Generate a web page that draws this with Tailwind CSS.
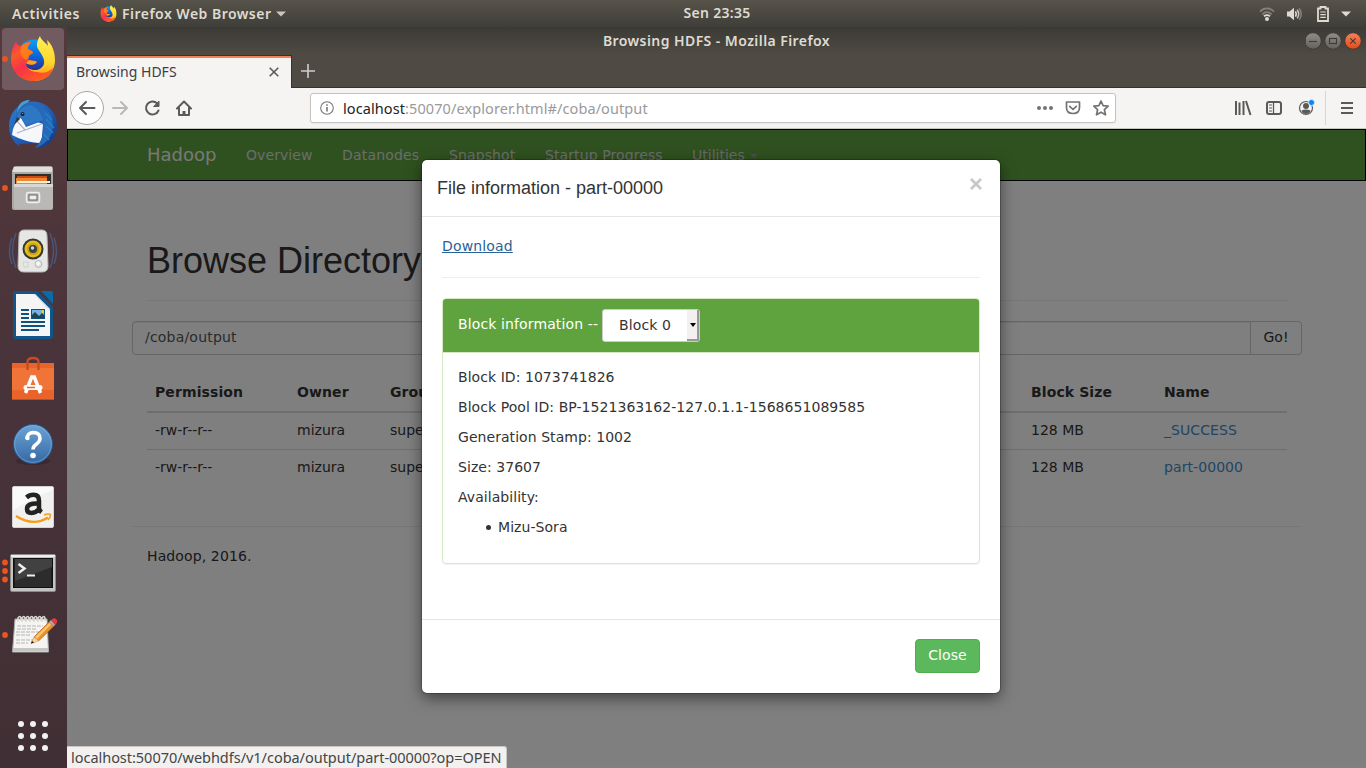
<!DOCTYPE html>
<html lang="en">
<head>
<meta charset="utf-8">
<title>Browsing HDFS</title>
<script src="https://cdn.jsdelivr.net/npm/@tailwindcss/browser@4"></script>
</head>
<body class="w-[1366px] h-[768px] overflow-hidden flex flex-col bg-[#3c3b37] font-['Noto_Sans',sans-serif] text-[14px]">

<!-- Desktop top bar -->
<header class="h-[27px] shrink-0 flex items-center bg-linear-to-b from-[#57534a] to-[#3f3e39] text-[#dfdbd2] font-semibold leading-[26px] whitespace-nowrap">
  <div class="w-[675px] flex items-center pl-3">
    <span class="w-[88px] tracking-[0.550px]">Activities</span>
    <svg class="w-[17px] h-[17px] mr-[5px]" viewBox="0 0 44 46"><use href="#fx"/></svg>
    <span class="tracking-[0.480px]">Firefox Web Browser</span>
    <svg class="w-[10px] h-[6px] ml-[5px]" viewBox="0 0 10 6"><path d="M0 .5h10L5 5.5z" fill="#c9c6be"/></svg>
  </div>
  <div class="w-[84px] text-center tracking-[0.300px] -mt-[1px]">Sen 23:35</div>
  <div class="flex-1 flex items-center justify-end pr-[15px]">
    <svg class="w-4 h-4 mr-[11px]" viewBox="0 0 16 16" fill="none" stroke-width="1.7"><path d="M1 5.6C5 1.300 11 1.300 15 5.600" stroke="#85827a"/><path d="M3.300 8.300C6 5.500 10 5.500 12.700 8.300" stroke="#85827a"/><path d="M5 10.200C7 8.700 9 8.700 11 10.200" stroke="#dfdbd2"/><circle cx="8" cy="13" r="2" fill="#dfdbd2"/></svg>
    <svg class="w-4 h-4 mr-[14px]" viewBox="0 0 16 16" fill="none"><path d="M1 5.500h2.500L8 1.700v12.600L3.500 10.500H1z" fill="#dfdbd2"/><path d="M9.400 5.300q1.700 2.700 0 5.400" stroke="#dfdbd2" stroke-width="1.500"/><path d="M11.200 3.700q3 4.300 0 8.600" stroke="#c9c6be" stroke-width="1.500"/><path d="M13.200 2.200q4 5.800 0 11.600" stroke="#85827a" stroke-width="1.500"/></svg>
    <svg class="w-[14px] h-[18px] mr-[11px]" viewBox="0 0 14 18"><path d="M2 3.500h2.500V2h5v1.500H12v12.500H2z" fill="none" stroke="#dfdbd2" stroke-width="1.800"/><path d="M4.300 7h5.500M4.300 9.700h5.500M4.300 12.300h5.500" stroke="#dfdbd2" stroke-width="1.200"/></svg>
    <svg class="w-[10px] h-[6px] mt-[1px]" viewBox="0 0 10 6"><path d="M0 .5h10L5 5.500z" fill="#dfdbd2"/></svg>
  </div>
</header>

<div class="flex flex-1 min-h-0">
<!-- Dock -->
<aside class="w-[67px] shrink-0 flex flex-col items-start bg-linear-to-b from-[#54393c] via-[#48333a] to-[#402f34] pt-[1px]">
  <svg class="w-[66px] h-[62px] mb-[1px]" viewBox="0 0 66 62">
    <defs>
      <linearGradient id="fxy" x1="0" y1="0" x2="0" y2="1"><stop offset="0" stop-color="#fff05a"/><stop offset=".6" stop-color="#ffd42a"/><stop offset="1" stop-color="#ff8a12"/></linearGradient>
      <linearGradient id="fxb" x1=".5" y1="0" x2=".5" y2="1"><stop offset="0" stop-color="#0aa0f5"/><stop offset=".5" stop-color="#0b62d8"/><stop offset="1" stop-color="#31207c"/></linearGradient>
      <linearGradient id="fxl" x1="0" y1="0" x2=".6" y2="1"><stop offset="0" stop-color="#f0256a"/><stop offset=".3" stop-color="#fa5a28"/><stop offset=".6" stop-color="#f8324a"/><stop offset="1" stop-color="#ff5a20"/></linearGradient>
      <symbol id="fx" viewBox="0 0 44 46">
        <circle cx="23" cy="21" r="17.500" fill="url(#fxb)"/>
        <path d="M29 0C26 5 25 9 27 13C30 18 34 22 33 28C31 34 23 36 17 32L6 30C8 40 15 45 23 45C36 45 44 35 44 24C44 16 41 8 36 4L37 10C34 6 30 4 29 0z" fill="url(#fxy)"/>
        <path d="M5 5C2 10 0 16 0 23C0 36 10 45 22 45C33 45 40 40 42 32C38 36 32 38 26 36C20 36 15 32 15 27C18 29 23 30 26 26C24 25 20 25 18 24C16 22 17 20 22 17C22 15 19 14 17 13C16 11 18 9 20 6C15 6 12 8 10 10C7 10 6 8 5 5z" fill="url(#fxl)"/>
        <path d="M11 9C14 7 18 6 20 6C18 9 16 11 17 13C19 14 22 15 22 17C19 19 17 19 18 22L15 24C11 22 7 16 11 9z" fill="#ff8a12" opacity=".75"/>
        <path d="M15 27C18 29 23 30 26 26C24 24 20 25 18 24z" fill="#ffa11a"/>
      </symbol>
    </defs>
    <rect x="2" y="0" width="62" height="62" rx="4" fill="#725b60"/>
    <circle cx="5" cy="31" r="2.900" fill="#e95420"/>
    <use href="#fx" x="11" y="8" width="44" height="46"/>
  </svg>

  <!-- Thunderbird -->
  <svg class="w-[66px] h-16" viewBox="0 0 66 64">
    <defs><linearGradient id="tb" x1="0" y1="0" x2="1" y2="1"><stop offset="0" stop-color="#2c7fd0"/><stop offset=".5" stop-color="#1f5fb8"/><stop offset="1" stop-color="#17317a"/></linearGradient></defs>
    <path d="M23 13C30 9 40 10 47 15C54 20 57 27 57 35C57 44 52 52 43 56L34 57L39 52L19 53L20 56C13 51 9 44 9 35C9 25 14 17 23 13z" fill="url(#tb)"/>
    <path d="M20 25L43 33L42 46L40 52C30 52 20 48 12 44L13 38L16 31z" fill="#f6f7fa"/>
    <path d="M17 30L25 39L42 33M25 39L17 42" fill="none" stroke="#b0b5c0" stroke-width="1.200"/>
    <path d="M18 16C21 11 24 9 30 9L27 12C36 12 44 15 49 21C54 28 54 38 50 46C46 52 41 55 35 57C42 50 44 44 43 34L42 30L26 36L21 27L17 29C16 24 16 20 18 16z" fill="#2868b8"/>
    <path d="M17 26C18 20 22 15 30 14C37 16 41 22 43 29L26 34L21 27z" fill="#2d77c5"/>
    <path d="M18 16C21 11 24 9 30 9L27 12C23 13 20 16 17 22z" fill="#4a9dcc"/>
    <path d="M45 22L52 29M46 28L54 37M46 35L53 42M44 43L49 49" stroke="#1e86c8" stroke-width="1.300"/>
    <circle cx="22.500" cy="23" r="2" fill="#18222e"/><circle cx="22.500" cy="22.500" r=".8" fill="#a58e55"/><path d="M17 26L20 28L14 34z" fill="#303844"/>
  </svg>

  <!-- Files -->
  <svg class="w-[66px] h-16" viewBox="0 0 66 64">
    <circle cx="5" cy="33" r="2.900" fill="#e95420"/>
    <path d="M13 14q0-3 3-3h34q3 0 3 3v39q0 2-2 2H14q-2 0-2-2V15z" fill="#aaa9a6"/><path d="M14 12h38v5H12.500z" fill="#e0dfdd"/>
    <path d="M15 19h36v12H15z" fill="#302f2e"/><path d="M17 21h30v5H17z" fill="#c84b12"/><path d="M16 23h31v7H16z" fill="#f38430"/><path d="M17 26h33v2H17z" fill="#fff0d2"/>
    <path d="M14 29h38q1 0 1 1v22q0 2-2 2H16q-2 0-2-2z" fill="#b9b8b6"/><path d="M14 29h39v3H14z" fill="#d8d7d5"/>
    <rect x="26.500" y="37.500" width="13" height="10" rx="2" fill="#bbb" stroke="#eee" stroke-width="1.500"/><rect x="29" y="40" width="8" height="5" fill="#eee" stroke="#666"/>
  </svg>

  <!-- Rhythmbox -->
  <svg class="w-[66px] h-16" viewBox="0 0 66 64">
    <g fill="none" stroke="#4c5578" stroke-width="1.500"><path d="M16 14q-7 17 0 35M12 19q-5 13 0 26M50 14q7 17 0 35M54 19q5 13 0 26"/></g>
    <path d="M24 11h18q5 0 5 6l1 30q0 6-6 6H24q-6 0-6-6l1-30q0-6 5-6z" fill="#e6e6e4" stroke="#b8b8b5"/>
    <circle cx="33" cy="30" r="10.500" fill="#353734"/><circle cx="33" cy="30" r="8.500" fill="#e4bd18"/><circle cx="33" cy="30" r="6" fill="#c8a01a"/><circle cx="33" cy="30" r="4" fill="#3e4248"/><circle cx="32.500" cy="29" r="1.700" fill="#d2d9df"/>
    <circle cx="38.500" cy="45" r="3.500" fill="#ddd" stroke="#bbb"/><circle cx="38" cy="44.500" r="2" fill="#f7f7f7"/><path d="M23 43h5v5h-4z" fill="none" stroke="#d2d2d2"/>
  </svg>

  <!-- Writer -->
  <svg class="w-[66px] h-16" viewBox="0 0 66 64">
    <path d="M15 8h22l16 16v29q0 3-3 3H16q-3 0-3-3V10q0-2 2-2z" fill="#10568a"/><path d="M41 8h10q2 0 2 2v11z" fill="#0b6aaa"/>
    <path d="M16 11h19l15 15v27H16z" fill="#f5f5f5"/><path d="M35 11l15 15v2L34 11z" fill="#d5d9dc"/>
    <path d="M21 27h8M21 31h8M21 35h8M21 39h24M21 43h24M21 47h18" stroke="#0f5180" stroke-width="2"/>
    <rect x="31" y="26" width="14" height="10" fill="#72b6df"/><path d="M31 36v-3l4-4 4 4 3-3 3 3v3z" fill="#234252"/><circle cx="43" cy="28.500" r="1.500" fill="#edce3d"/><rect x="31.500" y="26.500" width="13" height="9" fill="none" stroke="#0f5180"/>
  </svg>

  <!-- Software -->
  <svg class="w-[66px] h-16" viewBox="0 0 66 64">
    <path d="M12 16h42v37H12z" fill="#f07438"/><path d="M12 16h42v5H12zM12 43h42v10H12z" fill="#e9642b"/><path d="M12 52h42v1H12z" fill="#c64c20"/>
    <path d="M27.500 23v-8q0-4 5.500-4t5.500 4v8" fill="none" stroke="#c94a22" stroke-width="2.400"/>
    <path d="M25.500 46L31.700 30h2.600L40.500 46" fill="none" stroke="#fff" stroke-width="3.500"/><path d="M26 40.500h14" stroke="#fff" stroke-width="5" stroke-linecap="round"/><path d="M27 40.500h8" stroke="#e9642b" stroke-width="1.500"/>
  </svg>

  <!-- Help -->
  <svg class="w-[66px] h-16" viewBox="0 0 66 64">
    <defs><linearGradient id="hp" x1="0" y1="0" x2="0" y2="1"><stop stop-color="#6ba4d6"/><stop offset="1" stop-color="#3568a4"/></linearGradient></defs>
    <ellipse cx="33" cy="50" rx="17" ry="4" fill="#2d2227" opacity=".5"/><circle cx="33" cy="33" r="19.500" fill="url(#hp)" stroke="#29598f"/><circle cx="33" cy="33" r="18.300" fill="none" stroke="#82b2dc" opacity=".6"/>
    <path d="M27 28q0-6 6-6.500 7 0 7 6 0 3-4 6-3 2-3 5" fill="none" stroke="#fff" stroke-width="3.500"/><circle cx="27.500" cy="27" r="2.200" fill="#fff"/><circle cx="33" cy="44.500" r="2.800" fill="#fff"/>
  </svg>

  <!-- Amazon -->
  <svg class="w-[66px] h-[66px]" viewBox="0 0 66 66">
    <rect x="12.500" y="11.500" width="41" height="41" rx="1.500" fill="#f0f0ef" stroke="#d5d2d3"/><path d="M13 12h40v3Q30 24 13 35z" fill="#fff" opacity=".6"/>
    <path d="M26.500 22.500q3-2.700 7-2.700 5.500 0 5.500 6v6.500q0 3 2.500 5M38 28.500q-11-.5-11 5.500 0 4 4.500 4 5 0 7.500-4.500" fill="none" stroke="#222" stroke-width="4.500"/>
    <path d="M16 41q17 11 32 1.500" fill="none" stroke="#f79b1c" stroke-width="2.400"/><path d="M44 40q4-1.500 6.500-.5 0 3-2.500 5.500" fill="none" stroke="#f79b1c" stroke-width="1.500"/>
  </svg>

  <!-- Terminal -->
  <svg class="w-[66px] h-[63px]" viewBox="0 0 66 63">
    <g fill="#e95420"><circle cx="5" cy="21.500" r="2.900"/><circle cx="5" cy="30" r="2.900"/><circle cx="5" cy="38.500" r="2.900"/></g>
    <rect x="10.500" y="13.500" width="45" height="37" rx="1.500" fill="#c4c4c2" stroke="#8b8b88"/><path d="M11 14h44v2H11z" fill="#eeeeec"/><rect x="13" y="17" width="40" height="30" fill="#111"/><rect x="14.500" y="18" width="37" height="28" fill="#2c2c2c"/><path d="M15 18h37v8L15 40z" fill="#414141"/>
    <path d="M18.500 23l6 4.500-6 4.500" fill="none" stroke="#eee" stroke-width="2.500"/><path d="M27 34.500h8" stroke="#eee" stroke-width="2"/>
  </svg>

  <!-- Text editor -->
  <svg class="w-[66px] h-[62px]" viewBox="0 0 66 62">
    <circle cx="5" cy="31" r="2.900" fill="#e95420"/>
    <g transform="translate(0 1)">
    <path d="M15 14h32l1.500 33h-36z" fill="#f4f4f2" stroke="#aaa"/><path d="M13 43h35v3H13z" fill="#c5c5c3"/>
    <g fill="none" stroke="#d8d8d6" stroke-width="1.500"><path d="M18 17v-4q2-3 3 0v3M22 17v-4q2-3 3 0v3M26 17v-4q2-3 3 0v3M30 17v-4q2-3 3 0v3M34 17v-4q2-3 3 0v3M38 17v-4q2-3 3 0v3M42 17v-4q2-3 3 0v3"/></g>
    <path d="M17 21h26M17 24h20M16 27h24M16 30h14M16 35h17M16 38h12" stroke="#b5b5b5" stroke-width="1" stroke-dasharray="4 1"/>
    <path d="M31 38.500l3.500-7L49 17l4.500 4.500L39 35.500z" fill="#e9912c" stroke="#b85f13" stroke-width=".7"/><path d="M35 32L49.500 18l1.500 1.500L37 34z" fill="#fcc46d"/><path d="M31 38.500l3-6 4.500 3.500z" fill="#ecd6a6"/><path d="M31 38.500l1-2.500 2 1.500z" fill="#111"/>
    <path d="M49 17l2-2 4.500 4.500-2 2z" fill="#aaa"/><path d="M51 15q3-3 5-1 2.500 2 0 5l-1 1z" fill="#e23b3f"/>
    </g>
  </svg>
  <svg class="w-8 h-8 ml-[17px] mt-[54px]" viewBox="0 0 32 32" fill="#f3f2f2"><circle cx="4" cy="4" r="3"/><circle cx="16" cy="4" r="3"/><circle cx="28" cy="4" r="3"/><circle cx="4" cy="16" r="3"/><circle cx="16" cy="16" r="3"/><circle cx="28" cy="16" r="3"/><circle cx="4" cy="28" r="3"/><circle cx="16" cy="28" r="3"/><circle cx="28" cy="28" r="3"/></svg>
</aside>

<!-- Browser window -->
<main class="flex-1 min-w-0 flex flex-col">
  <div class="h-[28px] shrink-0 grid grid-cols-[1fr_300px_1fr] items-center bg-linear-to-b from-[#3b3a36] to-[#4f4b44] text-[#dfdbd2] font-semibold">
    <span></span>
    <span class="text-center leading-[28px] tracking-[0.430px]">Browsing HDFS - Mozilla Firefox</span>
    <svg class="w-[60px] h-[20px] justify-self-end" viewBox="0 0 60 20">
      <defs><linearGradient id="wb" x1="0" y1="0" x2="0" y2="1"><stop stop-color="#8f8d86"/><stop offset="1" stop-color="#63615a"/></linearGradient><linearGradient id="wc" x1="0" y1="0" x2="0" y2="1"><stop stop-color="#f7825c"/><stop offset="1" stop-color="#e04b19"/></linearGradient></defs>
      <g stroke="#33322e" stroke-width=".7"><circle cx="7" cy="10" r="8.200" fill="url(#wb)"/><circle cx="27" cy="10" r="8.200" fill="url(#wb)"/><circle cx="47" cy="10" r="8.200" fill="url(#wc)"/></g>
      <g fill="none" stroke="#3c3b37" stroke-width="1.100"><path d="M3 10.500h8"/><rect x="23.500" y="7.500" width="7" height="5"/><path d="M44.300 7.300l5.400 5.400M49.700 7.300l-5.400 5.400"/></g>
    </svg>
  </div>
  <div class="h-[33px] shrink-0 flex items-stretch bg-[#4f4b44]">
    <div class="w-[225px] flex items-center bg-[#f5f4f2] border-t-1 border-t-[#35332f] border-r border-r-[#35332f]">
      <div class="w-full h-full flex items-center border-t-2 border-[#f08256] pl-[9px] pr-[12px] pb-[2px] text-[#3d4045]">
        <span class="flex-1 text-[14px] -mt-[2px]">Browsing HDFS</span>
        <svg class="w-[10px] h-[10px]" viewBox="0 0 10 10"><path d="M.7.7l8.600 8.600M9.300.7L.7 9.300" stroke="#5a5a5a" stroke-width="1.600"/></svg>
      </div>
    </div>
    <div class="flex-1 flex items-center border-b border-[#35332f] pl-[9px]"><svg class="w-[14px] h-[14px]" viewBox="0 0 14 14"><path d="M7 0v14M0 7h14" stroke="#d0cdc7" stroke-width="1.600"/></svg></div>
  </div>
  <div class="h-[41px] shrink-0 flex items-center bg-[#f5f4f2] border-b border-[#c9c6c3] pl-[2px]">
    <svg class="w-[130px] h-[40px]" viewBox="0 0 130 40" fill="none" stroke="#5a5a5a" stroke-width="2" stroke-linecap="round" stroke-linejoin="round">
      <circle cx="18" cy="20" r="16.500" fill="#fdfdfd" stroke="#a9a8a6" stroke-width="1"/>
      <path d="M11 20h14.500M17 14l-6 6 6 6"/><path d="M44 20h14M52 14l6 6-6 6" stroke="#b9b8b6"/>
      <path d="M89.500 22.500a6.500 6.500 0 1 1-1.500-7.300"/><path d="M90 13.500v5h-5z" fill="#5a5a5a" stroke-width="1"/>
      <path d="M108 20.500l7-7 7 7M110 20v7h10v-7" stroke-width="2"/><path d="M115 27v-4" stroke-width="3" stroke-linecap="butt"/>
    </svg>
    <div class="ml-[111px] w-[806px] h-[30px] flex items-center rounded-[3px] border border-[#c5c3c1] bg-white shadow-[0_1px_2px_rgba(0,0,0,0.050)] pl-[9px] pr-[5px]">
      <svg class="w-[14px] h-[14px] mr-[9px]" viewBox="0 0 14 14"><circle cx="7" cy="7" r="6.300" fill="none" stroke="#777" stroke-width="1.100"/><path d="M7 6v4.500M7 3.300v1.500" stroke="#777" stroke-width="1.600"/></svg>
      <span class="flex-1 mt-[2px] text-[14.500px] tracking-[0.090px] text-[#9a9a9a]"><span class="text-[#222]">localhost</span>:50070/explorer.html#/coba/output</span>
      <svg class="w-[74px] h-[18px]" viewBox="0 0 74 18" fill="none" stroke="#737373" stroke-width="1.700" stroke-linejoin="round"><g fill="#737373" stroke="none"><circle cx="3" cy="9" r="2"/><circle cx="9" cy="9" r="2"/><circle cx="15" cy="9" r="2"/></g>
        <path d="M30.500 3h13v5.500q0 6-6.500 6t-6.500-6z"/><path d="M33.700 7.300L37 10.500l3.300-3.200" stroke-linecap="round"/>
        <path d="M65 2l2.100 4.700 5.100.5-3.800 3.500 1.100 5.100L65 13.200l-4.500 2.600 1.100-5.100-3.800-3.500 5.100-.5z"/></svg>
    </div>
    <svg class="ml-[107px] w-[143px] h-[40px]" viewBox="0 0 143 40" fill="none" stroke="#5a5a5a" stroke-width="2">
      <path d="M13 13v14M16.500 14.500V27M20.500 13v14M23 13l4.500 14" stroke-width="2"/>
      <rect x="44" y="14" width="14" height="12" rx="2"/><path d="M50.500 14v12" stroke-width="1.300"/><path d="M46 17h3M46 20h3M46 23h3" stroke-width="1"/>
      <circle cx="83" cy="20" r="6.500" stroke-width="1.200"/><circle cx="83" cy="18" r="3" fill="#5a5a5a" stroke="none"/><path d="M78.500 22.500q4.500-2 9 0-1 3.500-4.500 3.500t-4.500-3.500z" fill="#5a5a5a" stroke="none"/><circle cx="88.500" cy="14.500" r="3" fill="#0a84ff" stroke="#f5f4f2" stroke-width=".7"/>
      <path d="M102.500 3v34" stroke="#d8d6d4" stroke-width="1"/><path d="M118 15h12M118 20h12M118 25h12" stroke-width="1.800"/>
    </svg>
  </div>

  <!-- Page -->
  <div class="relative flex-1 min-h-0 bg-white font-['DejaVu_Sans',sans-serif] text-[#333] leading-5">
    <nav class="h-[52px] flex items-center border border-black bg-[#5fa33f] pl-[79px] text-[#d8d8d8]">
      <span class="text-[18px] w-[99px] text-[#f0f0f0]">Hadoop</span>
      <span class="w-[96px] tracking-[0.080px]">Overview</span><span class="w-[107px] tracking-[0.180px]">Datanodes</span><span class="w-[96px] tracking-[0.120px]">Snapshot</span><span class="w-[147px] tracking-[0.100px]">Startup Progress</span>
      <span class="flex items-center text-[#d0d0d0]">Utilities<svg class="ml-[5px] mt-[2px] w-2 h-1" viewBox="0 0 8 4"><path d="M0 0h8L4 4z" fill="#999"/></svg></span>
    </nav>
    <div class="w-[1170px] ml-[65px] pt-[60px]">
      <div class="mx-[15px] border-b border-[#eee] pb-[19px]"><h1 class="text-[36px] leading-[40px] font-['Liberation_Sans',sans-serif]">Browse Directory</h1></div>
      <div class="mt-5 flex h-[34px]">
        <div class="flex-1 border border-[#ccc] rounded-l-[4px] px-3 leading-[31px] text-[#555] tracking-[0.200px] shadow-[inset_0_1px_1px_rgba(0,0,0,0.075)]">/coba/output</div>
        <div class="-ml-px w-[52px] border border-[#ccc] rounded-r-[4px] text-center leading-[31px]">Go!</div>
      </div>
      <table class="mt-[18px] mx-[15px] w-[1140px] table-fixed text-left">
        <colgroup><col class="w-[142px]"><col class="w-[93px]"><col class="w-[641px]"><col class="w-[133px]"><col></colgroup>
        <tr class="h-[39px] border-b-2 border-[#ddd] tracking-[0.100px]"><th class="px-2 pb-px">Permission</th><th class="px-2 pb-px">Owner</th><th class="px-2 pb-px">Group</th><th class="px-2 pb-px">Block Size</th><th class="px-2 pb-px">Name</th></tr>
        <tr class="h-[37px] border-b border-[#ddd]"><td class="px-2 pb-[2px]">-rw-r--r--</td><td class="px-2 pb-[2px]">mizura</td><td class="px-2 pb-[2px]">supergroup</td><td class="px-2 pb-[2px]">128 MB</td><td class="px-2 pb-[2px] text-[#428bca] tracking-[0.080px]">_SUCCESS</td></tr>
        <tr class="h-[37px]"><td class="px-2 pb-[2px]">-rw-r--r--</td><td class="px-2 pb-[2px]">mizura</td><td class="px-2 pb-[2px]">supergroup</td><td class="px-2 pb-[2px]">128 MB</td><td class="px-2 pb-[2px] text-[#428bca] tracking-[0.080px]">part-00000</td></tr>
      </table>
      <div class="mt-[40px] border-t border-[#eee] pt-[19px] pl-[15px] tracking-[0.120px]">Hadoop, 2016.</div>
    </div>

    <div class="absolute inset-0 bg-black/50"></div>

    <!-- File information dialog -->
    <section class="absolute left-[355px] top-[31px] w-[578px] h-[533px] rounded-[5px] bg-white shadow-[0_0_0_1px_rgba(0,0,0,0.200),0_5px_15px_rgba(0,0,0,0.500)]">
      <div class="h-[57px] border-b border-[#e5e5e5] px-[15px] flex items-center justify-between">
        <h4 class="text-[18px] font-['Liberation_Sans',sans-serif]">File information - part-00000</h4>
        <svg class="w-3 h-3 mb-[8px] mr-[3px]" viewBox="0 0 12 12"><path d="M1 1l10 10M11 1L1 11" stroke="#c8c8c8" stroke-width="2.800"/></svg>
      </div>
      <div class="px-5 pt-[19px] h-[402px]">
        <a class="text-[#2a6496] underline block w-max tracking-[0.150px]">Download</a>
        <hr class="mt-[21px] border-[#eee]">
        <div class="mt-5 h-[266px] rounded-[4px] border border-[#d6e9c6] shadow-[0_1px_1px_rgba(0,0,0,0.050)]">
          <div class="h-[54px] flex items-center bg-[#5fa33f] border-b border-[#d6e9c6] rounded-t-[3px] px-[15px] text-white">
            <span class="w-[144px] -mt-[3px] tracking-[0.120px] whitespace-nowrap">Block information --</span>
            <div class="w-[98px] h-[33px] bg-white border border-[#ccc] rounded-[3px] flex items-center text-[#333] pl-4">
              <span class="flex-1 -mt-[2px] tracking-[0.120px]">Block 0</span>
              <span class="w-[12px] h-[31px] bg-[#f2f1f0] border-r-2 border-b-2 border-[#999] flex items-center justify-center"><svg class="w-[6px] h-1 ml-[2px]" viewBox="0 0 6 4"><path d="M0 0h6L3 4z"/></svg></span>
            </div>
          </div>
          <div class="pl-[15px] pt-[14px] flex flex-col gap-[10px] tracking-[0.055px]">
            <p>Block ID: 1073741826</p><p>Block Pool ID: BP-1521363162-127.0.1.1-1568651089585</p><p>Generation Stamp: 1002</p><p>Size: 37607</p><p>Availability:</p>
            <ul class="pl-[28px]"><li class="flex items-center gap-[7px]"><span class="w-[5px] h-[5px] rounded-full bg-[#333] mt-[1px]"></span>Mizu-Sora</li></ul>
          </div>
        </div>
      </div>
      <div class="h-[74px] border-t border-[#e5e5e5] px-5 pt-[19px] flex justify-end items-start">
        <button class="w-[65px] h-[34px] rounded-[4px] border border-[#4cae4c] bg-[#5cb85c] text-white pb-[2px] tracking-[0.100px]">Close</button>
      </div>
    </section>

    <div class="absolute left-0 bottom-0 w-[440px] h-[22px] rounded-tr-[3px] border-t border-r border-[#c9c6c3] bg-[#f2f1f0] pl-1 leading-[20px] text-[14.500px] tracking-[-0.030px] text-[#444] font-['Noto_Sans',sans-serif] whitespace-nowrap">localhost:50070/webhdfs/v1/coba/output/part-00000?op=OPEN</div>
  </div>
</main>
</div>
</body>
</html>
